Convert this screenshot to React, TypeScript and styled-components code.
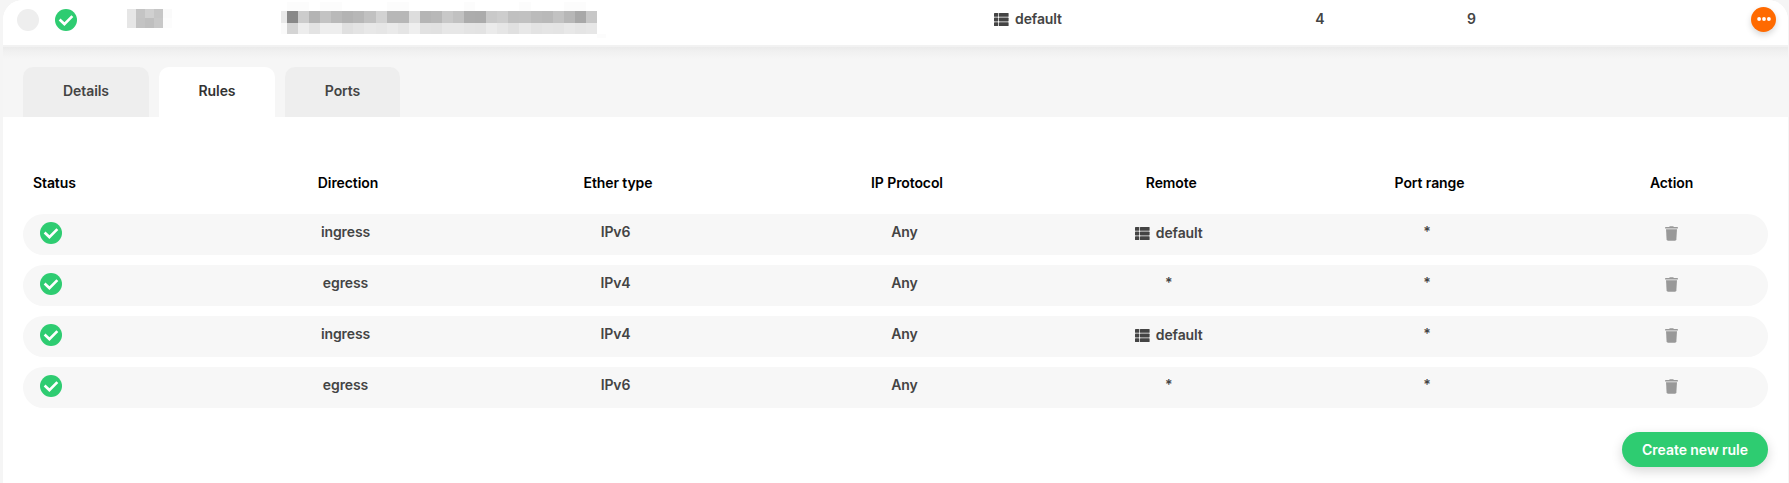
import React from "react";
import styled, { createGlobalStyle, css } from "styled-components";

const GlobalStyle = createGlobalStyle`
  * { box-sizing: border-box; }
  html, body { margin: 0; padding: 0; background: #f5f5f5; overflow: hidden; }
  body, button { font-family: Inter, "Liberation Sans", sans-serif; font-size: 14px; font-weight: 600; letter-spacing: -0.1px; color: #444; }
`;

const Page = styled.div`
  height: 483px;
  padding: 0 1px 0 3px;
  background: #f5f5f5;
`;

const Card = styled.section`
  height: 483px;
  background: #fff;
  border-radius: 20px 20px 0 0;
`;

const Summary = styled.header`
  display: grid;
  grid-template-columns: 14px 38px 72px 154px 713px 250px 151.5px 152px 1fr;
  height: 45px;
  background: #fff;
  border-radius: 20px 20px 0 0;
`;

const SummaryCell = styled.div<{ $center?: boolean; $top?: number }>`
  display: flex;
  align-items: flex-start;
  justify-content: ${(p) => (p.$center ? "center" : "flex-start")};
  padding-top: ${(p) => p.$top ?? 9}px;
  line-height: 20px;
`;

const MenuCell = styled(SummaryCell)`
  justify-content: flex-end;
  padding-right: 12px;
`;

const Radio = styled.span`
  width: 22px;
  height: 22px;
  border-radius: 50%;
  background: #eee;
`;

const MenuButton = styled.button`
  display: flex;
  align-items: center;
  justify-content: center;
  width: 25px;
  height: 25px;
  padding: 0 0 1px;
  border: 0;
  border-radius: 50%;
  background: #ff6a00;
  box-shadow: 0 3px 6px rgba(0, 0, 0, 0.16);
`;

const Tabs = styled.nav`
  display: flex;
  align-items: flex-end;
  gap: 10px;
  height: 72px;
  padding: 0 20px;
  background: linear-gradient(#f2f2f2 2px, #ebebeb 2px, #f1f1f1 7px, #f6f6f6 14px);
`;

const Tab = styled.button<{ $width: number; $active?: boolean }>`
  width: ${(p) => p.$width}px;
  height: 50px;
  padding: 0 0 4px;
  border: 0;
  border-radius: 10px 10px 0 0;
  background: ${(p) => (p.$active ? "#fff" : "#eee")};
  color: ${(p) => (p.$active ? "#333" : "#444")};
`;

const Panel = styled.main`
  padding: 56px 20px 0;
`;

const columns = css`
  display: grid;
  grid-template-columns: 187.5px 270px 270px 308px 220.5px 296px 193px;
`;

const HeadRow = styled.div`
  ${columns}
  height: 41px;
  line-height: 20px;
  color: #000;
`;

const HeadCell = styled.div<{ $align?: "left" | "last" }>`
  text-align: ${(p) => (p.$align === "left" ? "left" : "center")};
  padding-left: ${(p) => (p.$align === "left" ? 10 : p.$align === "last" ? 0 : 5)}px;
`;

const Rows = styled.div`
  display: flex;
  flex-direction: column;
  gap: 10px;
`;

const Row = styled.div`
  ${columns}
  height: 41px;
  border-radius: 20.5px;
  background: #f7f7f7;
`;

const Cell = styled.div<{ $status?: boolean; $top?: number }>`
  display: flex;
  align-items: flex-start;
  justify-content: ${(p) => (p.$status ? "flex-start" : "center")};
  padding: ${(p) => p.$top ?? 8}px 0 0 ${(p) => (p.$status ? 17 : 0)}px;
  line-height: 20px;
`;

const GroupLabel = styled.span`
  display: inline-flex;
  align-items: center;
  gap: 6px;
`;

const Footer = styled.footer`
  display: flex;
  justify-content: flex-end;
  padding-top: 24px;
`;

const CreateButton = styled.button`
  width: 146px;
  height: 35px;
  padding: 0 0 1px;
  border: 0;
  border-radius: 18px;
  background: #2ecc71;
  color: #fff;
  letter-spacing: -0.05px;
  box-shadow: 0 4px 12px rgba(0, 0, 0, 0.16);
`;

const CheckIcon = () => (
  <svg width="22" height="22" viewBox="0 0 22 22">
    <circle cx="11" cy="11" r="11" fill="#2ecc71" />
    <path d="M5.6 11.5l3.8 3.6 7-7" fill="none" stroke="#fff" strokeWidth="2.7" strokeLinecap="square" />
  </svg>
);

const ListIcon = () => (
  <svg width="15" height="13" viewBox="0 0 15 13" fill="#444">
    {[0, 4.6, 9.2].map((y) => (
      <React.Fragment key={y}>
        <rect x="0" y={y} width="4.2" height="3.8" rx="0.6" />
        <rect x="4.9" y={y} width="9.7" height="3.8" rx="0.6" />
      </React.Fragment>
    ))}
  </svg>
);

const TrashIcon = () => (
  <svg width="13" height="15" viewBox="0 0 13 15" fill="#999">
    <path d="M0.5 1.1h3.6L4.8 0.2h3.4l0.7 0.9h3.6q0.4 0 0.4 0.5v0.9H0.1v-0.9q0-0.5 0.4-0.5z" />
    <path d="M1 3.3h11l-0.6 10q-0.1 1.4-1.4 1.4H3q-1.3 0-1.4-1.4z" />
  </svg>
);

const DotsIcon = () => (
  <svg width="14" height="4" viewBox="0 0 14 4" fill="#fff">
    <circle cx="2.1" cy="2" r="1.9" />
    <circle cx="7" cy="2" r="1.9" />
    <circle cx="11.9" cy="2" r="1.9" />
  </svg>
);

const upper = "888888 cccccc b4b4b4 c3c3c3 b9b9b9 b3b3b3 b7b7b7 c1c1c1 d2d2d2 b7b7b7 b7b7b7 dddddd b5b5b5 b8b8b8 c8c8c8 c1c1c1 acacac ababab c9c9c9 cdcdcd c0c0c0 c1c1c1 bbbbbb b9b9b9 c2c2c2 b7b7b7 a8a8a8 c7c7c7".split(" ");
const lower = "d4d4d4 ededed e3e3e3 eeeeee eeeeee e0e0e0 e4e4e4 e8e8e8 e6e6e6 eaeaea e5e5e5 efefef e2e2e2 e1e1e1 e7e7e7 e7e7e7 e4e4e4 e3e3e3 ebebeb e6e6e6 e0e0e0 e8e8e8 e3e3e3 e5e5e5 e4e4e4 e8e8e8 e5e5e5 e7e7e7".split(" ");
const faint = [0, 1, 3, 4, 9, 10, 16, 21, 25, 26];

const MaskedId = () => (
  <svg width="326" height="36" viewBox="0 0 326 36" shapeRendering="crispEdges">
    {faint.map((i) => <rect key={i} x={6 + i * 11.07} y="0" width="11.07" height="9" fill="#fcfcfc" />)}
    <rect x="0" y="9" width="6" height="12" fill="#e9e9e9" />
    <rect x="0" y="21" width="6" height="11" fill="#fafafa" />
    {upper.map((c, i) => <rect key={i} x={6 + i * 11.07} y="9" width="11.07" height="12" fill={`#${c}`} />)}
    {lower.map((c, i) => <rect key={i} x={6 + i * 11.07} y="21" width="11.07" height="11" fill={`#${c}`} />)}
    <rect x="316" y="32" width="9" height="4" fill="#fcfcfc" />
  </svg>
);

const MaskedName = () => (
  <svg width="45" height="19" viewBox="0 0 45 19" shapeRendering="crispEdges">
    <rect x="0" y="0" width="9" height="19" fill="#e6e6e6" />
    <rect x="9" y="0" width="9" height="9" fill="#c4c4c4" />
    <rect x="18" y="0" width="9" height="9" fill="#d0d0d0" />
    <rect x="27" y="0" width="9" height="9" fill="#c6c6c6" />
    <rect x="9" y="9" width="9" height="10" fill="#c3c3c3" />
    <rect x="18" y="9" width="9" height="10" fill="#bfbfbf" />
    <rect x="27" y="9" width="9" height="10" fill="#c8c8c8" />
    <rect x="36" y="0" width="9" height="9" fill="#fafafa" />
    <rect x="36" y="9" width="9" height="10" fill="#fcfcfc" />
  </svg>
);

const DefaultGroup = () => (
  <GroupLabel>
    <ListIcon />
    default
  </GroupLabel>
);

const rules = [
  { direction: "ingress", ether: "IPv6", group: true },
  { direction: "egress", ether: "IPv4", group: false },
  { direction: "ingress", ether: "IPv4", group: true },
  { direction: "egress", ether: "IPv6", group: false },
];

export default function App() {
  return (
    <Page>
      <GlobalStyle />
      <Card>
        <Summary>
          <span />
          <SummaryCell><Radio /></SummaryCell>
          <SummaryCell><CheckIcon /></SummaryCell>
          <SummaryCell><MaskedName /></SummaryCell>
          <SummaryCell $top={2}><MaskedId /></SummaryCell>
          <SummaryCell $top={9}><DefaultGroup /></SummaryCell>
          <SummaryCell $center $top={9}>4</SummaryCell>
          <SummaryCell $center $top={9}>9</SummaryCell>
          <MenuCell $top={7}>
            <MenuButton aria-label="Actions"><DotsIcon /></MenuButton>
          </MenuCell>
        </Summary>
        <Tabs>
          <Tab $width={126}>Details</Tab>
          <Tab $width={116} $active>Rules</Tab>
          <Tab $width={115}>Ports</Tab>
        </Tabs>
        <Panel>
          <HeadRow>
            <HeadCell $align="left">Status</HeadCell>
            <HeadCell>Direction</HeadCell>
            <HeadCell>Ether type</HeadCell>
            <HeadCell>IP Protocol</HeadCell>
            <HeadCell>Remote</HeadCell>
            <HeadCell>Port range</HeadCell>
            <HeadCell $align="last">Action</HeadCell>
          </HeadRow>
          <Rows>
            {rules.map((rule, i) => (
              <Row key={i}>
                <Cell $status><CheckIcon /></Cell>
                <Cell>{rule.direction}</Cell>
                <Cell>{rule.ether}</Cell>
                <Cell>Any</Cell>
                <Cell $top={rule.group ? 9 : 8}>{rule.group ? <DefaultGroup /> : "*"}</Cell>
                <Cell>*</Cell>
                <Cell $top={11.5}><TrashIcon /></Cell>
              </Row>
            ))}
          </Rows>
          <Footer>
            <CreateButton>Create new rule</CreateButton>
          </Footer>
        </Panel>
      </Card>
    </Page>
  );
}
